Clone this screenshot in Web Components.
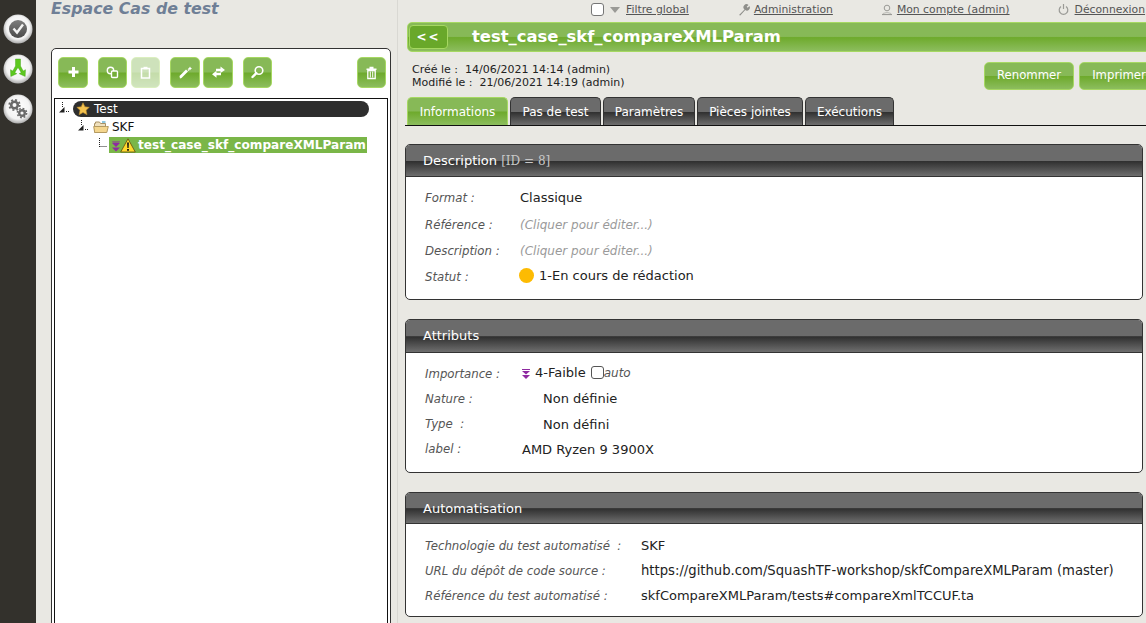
<!DOCTYPE html>
<html lang="fr">
<head>
<meta charset="utf-8">
<title>Espace Cas de test</title>
<style>
	html, body { margin: 0; height: 100%; overflow: hidden; background: #e9e8e3; }
	body { font: 13px/1.2 "DejaVu Sans", Verdana, sans-serif; color: #222; }
</style>
</head>
<body>
<sk-app>
	<sk-nav slot="nav"></sk-nav>
	<sk-tree-panel slot="left"></sk-tree-panel>
	<sk-top-menu slot="right"></sk-top-menu>
	<sk-title-bar slot="right">test_case_skf_compareXMLParam</sk-title-bar>
	<sk-meta-row slot="right"></sk-meta-row>
	<sk-tabs slot="right">
		<sk-tab active style="width:101px">Informations</sk-tab>
		<sk-tab style="width:91px">Pas de test</sk-tab>
		<sk-tab style="width:92px">Paramètres</sk-tab>
		<sk-tab style="width:106px">Pièces jointes</sk-tab>
		<sk-tab style="width:89px">Exécutions</sk-tab>
	</sk-tabs>
	<sk-panel slot="right" heading="Description" note="[ID = 8]" style="--label-w:96px;--row-h:26.4px;--head-h:31px;--body-pad:8px 0 8px;margin-top:18px">
		<sk-field label="Format :">Classique</sk-field>
		<sk-field label="Référence :"><sk-hint>(Cliquer pour éditer...)</sk-hint></sk-field>
		<sk-field label="Description :"><sk-hint>(Cliquer pour éditer...)</sk-hint></sk-field>
		<sk-field label="Statut :"><sk-status>1-En cours de rédaction</sk-status></sk-field>
	</sk-panel>
	<sk-panel slot="right" heading="Attributs" style="--label-w:98px;--row-h:25.1px;--head-h:32px;--body-pad:9px 0 9.800px;margin-top:19px">
		<sk-field label="Importance :"><sk-importance>4-Faible</sk-importance></sk-field>
		<sk-field label="Nature :"><span style="margin-left:21px">Non définie</span></sk-field>
		<sk-field label="Type&nbsp; :"><span style="margin-left:21px">Non défini</span></sk-field>
		<sk-field label="label :">AMD Ryzen 9 3900X</sk-field>
	</sk-panel>
	<sk-panel slot="right" heading="Automatisation" style="--label-w:217px;--row-h:25px;--head-h:30px;--body-pad:10px 0 7px;margin-top:19px">
		<sk-field label="Technologie du test automatisé&nbsp; :">SKF</sk-field>
		<sk-field label="URL du dépôt de code source :"><span style="font-size:13.2px">https://github.com/SquashTF-workshop/skfCompareXMLParam (master)</span></sk-field>
		<sk-field label="Référence du test automatisé :">skfCompareXMLParam/tests#compareXmlTCCUF.ta</sk-field>
	</sk-panel>
</sk-app>

<script>
	const FONT = '"DejaVu Sans", Verdana, sans-serif';
	const GREEN = 'linear-gradient(#87b957 0, #87b957 48%, #6eaa2c 52%, #8cbd5e 100%)';
	const DARK = 'linear-gradient(#6b6b6b 0, #6b6b6b 50%, #2f2f2f 52%, #6e6e6e 100%)';

	function define(tag, html, setup) {
		customElements.define(tag, class extends HTMLElement {
			constructor() {
				super();
				this.attachShadow({ mode: 'open' }).innerHTML = html;
			}
			connectedCallback() {
				if (setup) setup(this);
			}
		});
	}

	const icons = {
		plus: '<path d="M6 2h3v3.500h3.500v3H9V12H6V8.500H2.500v-3H6z" fill="#fff"/>',
		copy: '<g fill="none" stroke="#fff" stroke-width="1.400"><circle cx="5.500" cy="5.500" r="3.200"/><rect x="6.500" y="6" width="6" height="6.500" rx="1" fill="#74ae38"/></g>',
		paste: '<path d="M3.500 3.500h8v9.500h-8z" fill="none" stroke="#fff" stroke-width="1.500"/><path d="M5.500 1.800h4v2.500h-4z" fill="#fff"/>',
		edit: '<path d="M2 13.500l-.5-2.500 6.500-6.500 2 2-6.500 6.500z" fill="#fff"/><path d="M9.500 5l1-1 1 1-1 1zM12 1.500l.7 1.300 1.300.7-1.300.7-.7 1.300-.7-1.300-1.300-.7 1.300-.7z" fill="#fff"/>',
		move: '<path d="M5 3.800h4.500V1.500l4.500 3.500-4.500 3V6.200H5zM10 7.800H5.500V5.800L1 9.300l4.500 3.500v-2.600H10z" fill="#fff"/>',
		search: '<circle cx="9" cy="5.500" r="3.800" fill="none" stroke="#fff" stroke-width="1.600"/><path d="M6.300 8.200L2.500 12" stroke="#fff" stroke-width="2.400" stroke-linecap="round"/>',
		trash: '<path d="M2.500 3.500h10v1.400h-10zM5.500 1.800h4v1.700h-4z" fill="#fff"/><path d="M3.800 5.500h7.400v8H3.800z" fill="none" stroke="#fff" stroke-width="1.300"/><path d="M6.300 6.500v6M8.700 6.500v6" stroke="#fff"/>',
	};

	define('sk-app', `
		<style>
			:host { display: grid; grid-template-columns: 36px 361px 1fr; height: 623px; width: 1146px; overflow: hidden; }
			.right { border-left: 1px solid #d9d8d3; padding-left: 7px; overflow: hidden; min-width: 0; }
			.left { min-width: 0; overflow: hidden; }
		</style>
		<slot name="nav"></slot>
		<div class="left"><slot name="left"></slot></div>
		<div class="right"><slot name="right"></slot></div>
	`);

	define('sk-nav', `
		<style>
			:host { display: flex; flex-direction: column; align-items: center; gap: 10px; background: #33312c; padding: 14px 1px 0 0; box-sizing: border-box; }
			svg { display: block; width: 30px; height: 30px; }
		</style>
		<svg viewBox="0 0 30 30">
			<defs>
				<radialGradient id="knob" cx="50%" cy="45%" r="55%"><stop offset="0" stop-color="#fff"/><stop offset=".72" stop-color="#f3f3f3"/><stop offset="1" stop-color="#a9a9a9"/></radialGradient>
				<linearGradient id="gr" x1="0" y1="0" x2="0" y2="1"><stop offset="0" stop-color="#7d7d7d"/><stop offset="1" stop-color="#4a4a4a"/></linearGradient>
			</defs>
			<circle cx="15" cy="15" r="14.500" fill="url(#knob)"/>
			<circle cx="15" cy="15" r="9" fill="url(#gr)"/>
			<path d="M10.500 14.500l3.500 4 6-8" fill="none" stroke="#f2f2f2" stroke-width="2.400"/>
		</svg>
		<svg viewBox="0 0 30 30">
			<defs><radialGradient id="knob2" cx="50%" cy="45%" r="55%"><stop offset="0" stop-color="#fff"/><stop offset=".72" stop-color="#f3f3f3"/><stop offset="1" stop-color="#a9a9a9"/></radialGradient></defs>
			<circle cx="15" cy="15" r="14.500" fill="url(#knob2)"/>
			<path d="M12.500 5h5v7l2.700 5 2.300-1.300-.3 6.800-6-2.800 2-1.300-3.200-5-3.200 5 2 1.300-6 2.800-.3-6.800 2.300 1.300 2.700-5z" fill="#5cc81e" stroke="#3d9a12" stroke-width=".4"/>
		</svg>
		<svg viewBox="0 0 30 30">
			<defs><radialGradient id="knob3" cx="50%" cy="45%" r="55%"><stop offset="0" stop-color="#fff"/><stop offset=".72" stop-color="#f3f3f3"/><stop offset="1" stop-color="#a9a9a9"/></radialGradient></defs>
			<circle cx="15" cy="15" r="14.500" fill="url(#knob3)"/>
			<g fill="none" stroke="#6b6b6b">
				<circle cx="11.500" cy="11" r="3.300" stroke-width="2.600"/>
				<circle cx="11.500" cy="11" r="5.200" stroke-width="1.800" stroke-dasharray="2 2.080"/>
				<circle cx="19" cy="19" r="2.800" stroke-width="2.400"/>
				<circle cx="19" cy="19" r="4.600" stroke-width="1.600" stroke-dasharray="1.800 1.810"/>
			</g>
		</svg>
	`);

	define('sk-icon-btn', `
		<style>
			:host { display: block; flex: none; box-sizing: border-box; height: 31px; width: 30px; border: 1px solid #a6d862; border-radius: 5px; background: ${GREEN}; }
			:host([disabled]) { opacity: .4; }
			svg { display: block; width: 15px; height: 15px; margin: 7px auto 0; }
		</style>
		<svg viewBox="0 0 15 15"></svg>
	`, (host) => {
		host.shadowRoot.querySelector('svg').innerHTML = icons[host.getAttribute('icon')];
	});

	define('sk-tree-panel', `
		<style>
			:host { display: flex; flex-direction: column; height: 100%; padding-left: 15px; box-sizing: border-box; font-family: ${FONT}; }
			h1 { margin: 0; height: 39px; font: italic bold 15.800px/18px ${FONT}; color: #6f7f96; }
			.box { flex: 1; width: 340px; box-sizing: border-box; margin-top: 9px; margin-bottom: -8px; background: #fff; border: 1px solid #333; border-radius: 5px 5px 0 0; padding: 8px 2px 0; display: flex; flex-direction: column; }
			.tools { display: flex; height: 31px; padding-left: 4px; }
			.tree { flex: 1; margin-top: 10px; border: 1px solid #111; padding-top: 1px; width: 334px; box-sizing: border-box; }
			.gap-10 { margin-left: 10px; }
			.gap-3 { margin-left: 3px; }
		</style>
		<h1>Espace Cas de test</h1>
		<div class="box">
			<div class="tools">
				<sk-icon-btn icon="plus"></sk-icon-btn>
				<sk-icon-btn icon="copy" class="gap-10" style="width:29px"></sk-icon-btn>
				<sk-icon-btn icon="paste" disabled class="gap-3" style="width:29px;margin-left:4px"></sk-icon-btn>
				<sk-icon-btn icon="edit" class="gap-10"></sk-icon-btn>
				<sk-icon-btn icon="move" class="gap-3"></sk-icon-btn>
				<sk-icon-btn icon="search" class="gap-10" style="width:29px"></sk-icon-btn>
				<sk-icon-btn icon="trash" style="width:29px;margin-left:85px"></sk-icon-btn>
			</div>
			<div class="tree">
				<sk-tree-node depth="0" kind="root">Test</sk-tree-node>
				<sk-tree-node depth="1" kind="folder">SKF</sk-tree-node>
				<sk-tree-node depth="2" kind="leaf">test_case_skf_compareXMLParam</sk-tree-node>
			</div>
		</div>
	`);

	const ladderOpen = '<svg class="ladder" width="16" height="16" viewBox="0 0 16 16"><path d="M5.500 1v6" stroke="#222" stroke-dasharray="1 1"/><path d="M2 11.500L7.500 6v5.500z" fill="#222"/><path d="M9 10.500h3" stroke="#222" stroke-dasharray="1 1"/></svg>';
	const ladderLeaf = '<svg class="ladder" width="16" height="16" viewBox="0 0 16 16"><path d="M6.500 1v9M6.500 9.500h7" stroke="#222" stroke-dasharray="1 1"/></svg>';

	define('sk-tree-node', `
		<style>
			:host { display: flex; align-items: center; height: 18px; font: 13px/16px ${FONT}; color: #111; }
			.ladder { flex: none; display: block; }
			.row { display: flex; align-items: center; height: 16px; white-space: nowrap; }
			:host([kind="root"]) { padding-left: 2px; }
			:host([kind="root"]) .row { width: 296px; border-radius: 8px; background: #2e2e2e; color: #fff; font-size: 12px; padding-left: 3px; box-sizing: border-box; gap: 4px; }
			:host([kind="folder"]) { padding-left: 21px; }
			:host([kind="folder"]) .row { gap: 3px; font-size: 12px; margin-left: 1px; }
			:host([kind="leaf"]) { padding-left: 38px; }
			:host([kind="leaf"]) .row { width: 258px; background: #7ab648; color: #fff; font-weight: bold; font-size: 12.100px; box-sizing: border-box; padding-left: 1px; }
			svg { flex: none; display: block; }
		</style>
		<span id="lad"></span><div class="row"><span id="ic" style="display:flex"></span><slot></slot></div>
	`, (host) => {
		const kind = host.getAttribute('kind');
		const root = host.shadowRoot;
		root.getElementById('lad').innerHTML = kind === 'leaf' ? ladderLeaf : ladderOpen;
		root.getElementById('lad').style.display = 'block';
		root.getElementById('lad').style.height = '16px';
		root.getElementById('ic').innerHTML = {
			root: '<svg width="14" height="14" viewBox="0 0 14 14"><path d="M7 .8l1.900 4 4.400.5-3.200 3 .9 4.400L7 10.500l-3.900 2.200.9-4.400-3.200-3 4.400-.5z" fill="#f4c24f" stroke="#b98a2a" stroke-width=".6"/></svg>',
			folder: '<svg width="16" height="14" viewBox="0 0 16 14"><path d="M1.500 12.500V3.500h1V2h4l1 1.500h5V6" fill="#efe0bd" stroke="#a89164"/><path d="M9 1h3.500v2H9z" fill="#8fc6de"/><path d="M.7 6.500h12.800l1.800 0-1.500 6H1.700z" fill="#f4d68e" stroke="#b49a60"/></svg>',
			leaf: '<svg width="13" height="15" viewBox="0 0 13 15"><path d="M2 3.500h8L9.300 4.500H2.700zM2 5h8L6 9zM2 9.500h8l-4 4z" fill="#8e2aa0"/></svg><svg width="16" height="15" viewBox="0 0 16 15" style="margin-left:-3px"><path d="M8 .8L15.300 14H.7z" fill="#ffd92e" stroke="#6a5a12" stroke-width=".9" stroke-linejoin="round"/><path d="M7.100 4.500h1.800l-.3 5.500H7.400zM7.100 11h1.800v1.700H7.100z" fill="#111"/></svg>',
		}[kind];
		root.getElementById('ic').style.marginRight = kind === 'leaf' ? '2px' : '0';
	});

	define('sk-top-menu', `
		<style>
			:host { display: flex; align-items: center; height: 22px; box-sizing: border-box; padding: 0 0 4px 186px; font: 10.800px/18px ${FONT}; color: #555; white-space: nowrap; }
			a { color: #555; text-decoration: underline; margin-top: 2px; }
			input { appearance: none; display: block; margin: 0; width: 13px; height: 13px; box-sizing: border-box; background: #fff; border: 1px solid #767676; border-radius: 3px; flex: none; }
			svg { display: block; flex: none; }
		</style>
		<input type="checkbox" aria-label="Filtre global">
		<svg width="10" height="8" viewBox="0 0 10 8" style="margin:2px 6px 0 6px"><path d="M0 1h10L5 7z" fill="#9a9a96"/></svg>
		<a>Filtre global</a>
		<svg width="13" height="13" viewBox="0 0 13 13" style="margin:0 3px 0 49px"><path d="M1 12l5.500-5.500a3 3 0 0 1 4-4.500L8.700 3.800l1 1 1.800-1.700a3 3 0 0 1-4.300 4L2.300 12.500z" fill="#8e8e8a"/></svg>
		<a>Administration</a>
		<svg width="12" height="13" viewBox="0 0 12 13" style="margin:0 4px 0 48px"><circle cx="6" cy="5" r="2.800" fill="none" stroke="#9a9a96"/><path d="M1 11.500h10" stroke="#9a9a96" stroke-width="1.200"/><path d="M2 10.500q4-2.500 8 0" fill="none" stroke="#bdbdb8"/></svg>
		<a>Mon compte (admin)</a>
		<svg width="11" height="13" viewBox="0 0 11 13" style="margin:0 6px 0 48px"><path d="M3 3.500a4.300 4.300 0 1 0 5 0M5.500 1v5" fill="none" stroke="#9a9a96" stroke-width="1.200"/></svg>
		<a>Déconnexion</a>
	`);

	define('sk-title-bar', `
		<style>
			:host { display: flex; align-items: center; box-sizing: border-box; height: 30px; margin: 0 -20px 0 2px; border: 1px solid #a6d862; border-radius: 5px; background: ${GREEN}; padding-left: 1px; }
			.back { box-sizing: border-box; width: 39px; height: 24px; flex: none; display: flex; align-items: center; justify-content: center; border: 1px solid #a6d862; border-radius: 4px; background: #69a82a; color: #fff; font: bold 12px/1 ${FONT}; letter-spacing: 2px; }
			.name { margin-left: 24px; color: #fff; font: bold 16.400px/1 ${FONT}; white-space: nowrap; }
		</style>
		<div class="back">&lt;&lt;</div>
		<div class="name"><slot></slot></div>
	`);

	define('sk-button', `
		<style>
			:host { display: flex; flex: none; align-items: center; box-sizing: border-box; height: 28px; padding: 0 12px; border: 1px solid #a6d862; border-radius: 5px; background: ${GREEN}; color: #fff; font: 11.700px/1 ${FONT}; white-space: nowrap; }
		</style>
		<slot></slot>
	`);

	define('sk-meta-row', `
		<style>
			:host { display: flex; height: 45px; margin-right: -40px; font: 11px/13px ${FONT}; color: #222; white-space: nowrap; }
			.meta { width: 579px; padding: 11px 0 0 7px; flex: none; box-sizing: border-box; }
			.btns { display: flex; gap: 5px; padding-top: 10px; align-items: flex-start; }
		</style>
		<div class="meta">
			<div>Créé le :&nbsp; 14/06/2021 14:14 (admin)</div>
			<div>Modifié le :&nbsp; 21/06/2021 14:19 (admin)</div>
		</div>
		<div class="btns"><sk-button>Renommer</sk-button><sk-button>Imprimer</sk-button></div>
	`);

	define('sk-tabs', `
		<style>
			:host { display: flex; gap: 2px; height: 29px; box-sizing: border-box; border-bottom: 1px solid #111; padding-left: 2px; margin-right: -10px; }
		</style>
		<slot></slot>
	`);

	define('sk-tab', `
		<style>
			:host { display: flex; align-items: center; justify-content: center; box-sizing: border-box; height: 28px; border: 1px solid #333; border-bottom: 0; border-radius: 5px 5px 0 0; background: ${DARK}; color: #fff; font: 12px/1 ${FONT}; white-space: nowrap; }
			:host([active]) { border-color: #a6d862; background: ${GREEN}; }
		</style>
		<slot></slot>
	`);

	define('sk-panel', `
		<style>
			:host { display: block; box-sizing: border-box; margin-right: 3px; background: #fff; border: 1px solid #333; border-radius: 5px; overflow: hidden; }
			header { height: var(--head-h); background: ${DARK}; border-bottom: 1px solid #333; color: #fff; font: 13px/32px ${FONT}; padding-left: 17px; white-space: nowrap; }
			.note { color: #c8c8c8; font: 12px "DejaVu Serif", serif; }
			.body { padding: var(--body-pad); }
		</style>
		<header><span id="h"></span> <span class="note" id="n"></span></header>
		<div class="body"><slot></slot></div>
	`, (host) => {
		host.shadowRoot.getElementById('h').textContent = host.getAttribute('heading');
		host.shadowRoot.getElementById('n').textContent = host.getAttribute('note') || '';
	});

	define('sk-field', `
		<style>
			:host { display: grid; grid-template-columns: calc(var(--label-w) - 1px) 1fr; align-items: center; height: var(--row-h); padding-left: 19px; font: 13px/1.2 ${FONT}; color: #222; white-space: nowrap; }
			.label { font-style: italic; color: #555; font-size: 11.750px; }
		</style>
		<span class="label" id="l"></span><div><slot></slot></div>
	`, (host) => {
		host.shadowRoot.getElementById('l').textContent = host.getAttribute('label');
	});

	define('sk-hint', `
		<style>:host { font-style: italic; color: #9a9a9a; font-size: 12px; }</style><slot></slot>
	`);

	define('sk-status', `
		<style>
			:host { display: inline-flex; align-items: center; gap: 5px; margin-left: -1px; }
			i { width: 15px; height: 15px; border-radius: 50%; background: #fdbb02; display: block; }
		</style>
		<i></i><slot></slot>
	`);

	define('sk-importance', `
		<style>
			:host { display: inline-flex; align-items: center; }
			svg { display: block; margin-right: 5px; margin-top: 3px; }
			input { appearance: none; display: block; margin: 0 0 0 5px; width: 13px; height: 13px; box-sizing: border-box; background: #fff; border: 1px solid #555; border-radius: 3px; }
			em { color: #555; font-size: 12px; }
		</style>
		<svg width="8" height="10" viewBox="0 0 8 10"><path d="M0 0h8v1H0zM0 2h8L4 5.500zM0 6h8l-4 4z" fill="#8e2aa0"/></svg>
		<slot></slot><input type="checkbox" aria-label="auto"><em>auto</em>
	`);
</script>
</body>
</html>
